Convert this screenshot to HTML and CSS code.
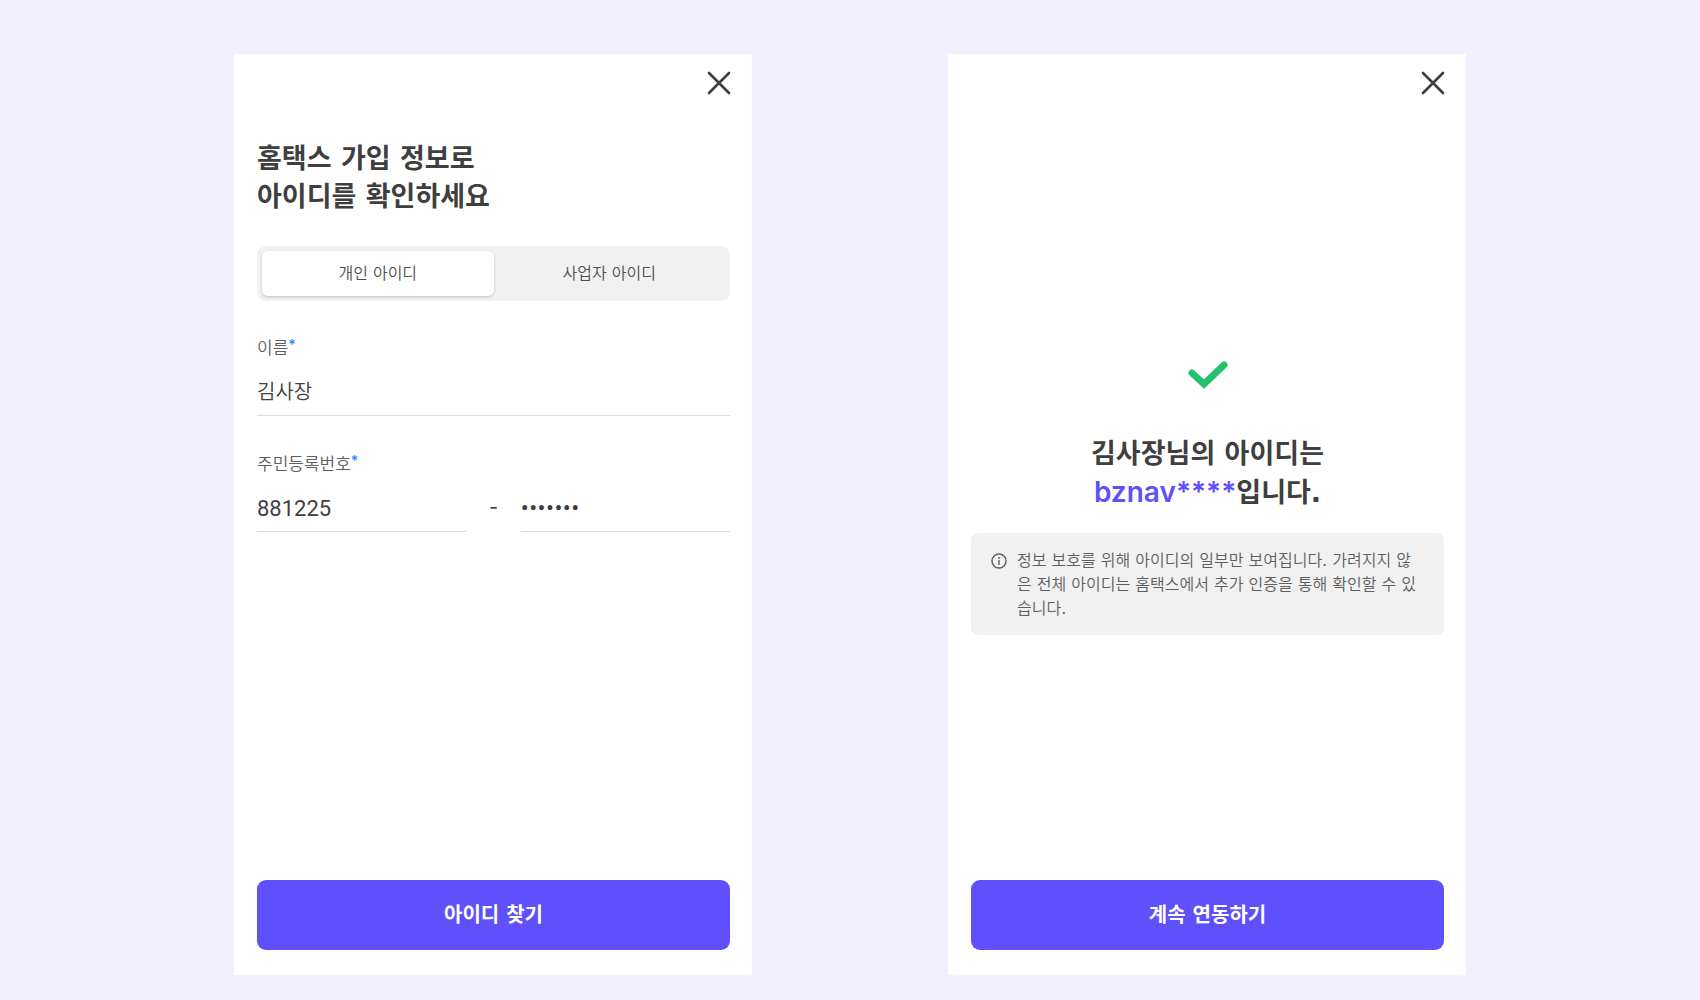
FILE: index.html
```html
<!DOCTYPE html>
<html lang="ko">
<head>
  <meta charset="utf-8">
  <meta name="viewport" content="width=device-width, initial-scale=1">
  <title>홈택스 아이디 찾기</title>
  <link rel="stylesheet" href="styles.css">
</head>
<body>
  <main class="board">
    <section class="screen">
      <header class="topbar">
        <button class="close" type="button" aria-label="닫기">
          <svg viewBox="0 0 24 24" aria-hidden="true"><path d="M2 2L22 22M22 2L2 22"/></svg>
        </button>
      </header>
      <form class="form">
        <h1 class="title">홈택스 가입 정보로<br>아이디를 확인하세요</h1>
        <div class="tabs">
          <button class="tab tab-active" type="button" aria-pressed="true">개인 아이디</button>
          <button class="tab" type="button" aria-pressed="false">사업자 아이디</button>
        </div>
        <div class="field">
          <label class="label" for="name">이름<span class="required">*</span></label>
          <input class="input" id="name" type="text" value="김사장">
        </div>
        <div class="field">
          <label class="label" for="rrn-front">주민등록번호<span class="required">*</span></label>
          <div class="split">
            <input class="input input-number" id="rrn-front" type="text" inputmode="numeric" value="881225">
            <span class="dash">-</span>
            <input class="input input-secret" type="password" value="1234567" aria-label="주민등록번호 뒷자리">
          </div>
        </div>
        <button class="submit" type="button">아이디 찾기</button>
      </form>
    </section>

    <section class="screen">
      <header class="topbar">
        <button class="close" type="button" aria-label="닫기">
          <svg viewBox="0 0 24 24" aria-hidden="true"><path d="M2 2L22 22M22 2L2 22"/></svg>
        </button>
      </header>
      <div class="result">
        <svg class="check" viewBox="0 0 40 28" aria-hidden="true"><path d="M4 12L16 23L36 4"/></svg>
        <h2 class="title">김사장님의 아이디는<br><span class="account">bznav****</span>입니다.</h2>
        <div class="notice">
          <svg class="info" viewBox="0 0 16 16" aria-hidden="true">
            <circle cx="8" cy="8" r="7"/>
            <path d="M8 7V12M8 4V6"/>
          </svg>
          <p class="notice-text">정보 보호를 위해 아이디의 일부만 보여집니다. 가려지지 않은 전체 아이디는 홈택스에서 추가 인증을 통해 확인할 수 있습니다.</p>
        </div>
      </div>
      <button class="submit" type="button">계속 연동하기</button>
    </section>
  </main>
</body>
</html>
```
FILE: styles.css
```css
* {
  box-sizing: border-box;
}

body {
  margin: 0;
  background: #f2f0ff;
  color: #3f3f3f;
  font-family: "DejaVu Sans", "Noto Sans CJK KR", sans-serif;
}

button,
input {
  margin: 0;
  padding: 0;
  border: 0;
  background: none;
  color: inherit;
  font: inherit;
}

.board {
  display: grid;
  grid-template-columns: 1fr 1fr;
  gap: 196px;
  min-height: 100vh;
  padding: 54px 234px 25px;
}

.screen {
  display: flex;
  flex-direction: column;
  padding: 17px 22px 25px 23px;
  background: #fff;
}

.topbar {
  display: flex;
  justify-content: flex-end;
}

.close {
  width: 24px;
  height: 24px;
  margin-right: -1px;
}

.close svg {
  display: block;
  fill: none;
  stroke: #3d3d3d;
  stroke-width: 2.6;
  stroke-linecap: round;
}

.form {
  display: flex;
  flex: 1;
  flex-direction: column;
  padding-top: 45px;
}

.title {
  margin: 0;
  font-size: 27px;
  font-weight: 600;
  line-height: 38px;
}

.tabs {
  display: flex;
  margin-top: 30px;
  padding: 5px;
  border-radius: 9px;
  background: #f1f1f1;
}

.tab {
  flex: 1;
  height: 45px;
  padding-bottom: 4px;
  border-radius: 6px;
  color: #505050;
  font-size: 16px;
  font-weight: 350;
}

.tab-active {
  background: #fff;
  box-shadow: 0 1px 3px rgba(0, 0, 0, 0.2);
}

.field {
  display: flex;
  flex-direction: column;
  padding-top: 34px;
}

.field + .field {
  padding-top: 35px;
}

.label {
  color: #5e5e5e;
  font-size: 17px;
  font-weight: 350;
  line-height: 26px;
}

.required {
  color: #2f86ff;
  font-family: Inter, sans-serif;
  font-size: 14px;
  font-weight: 600;
  line-height: 1;
  vertical-align: 4px;
}

.input {
  width: 100%;
  height: 55px;
  padding-top: 5px;
  border-bottom: 1px solid #ddd;
  border-radius: 0;
  font-family: Roboto, "Noto Sans CJK KR", sans-serif;
  font-size: 20px;
  font-weight: 350;
}

.input-number {
  font-size: 22px;
  font-weight: 400;
}

.input-secret {
  font-size: 26px;
}

.split {
  display: grid;
  grid-template-columns: 1fr 54px 1fr;
  align-items: center;
}

.split .input {
  padding-top: 8px;
}

.dash {
  padding-top: 4px;
  font-family: Inter, sans-serif;
  font-size: 20px;
  text-align: center;
}

.submit {
  height: 70px;
  margin-top: auto;
  padding-bottom: 4px;
  border-radius: 9px;
  background: #5e50fd;
  color: #fff;
  font-size: 20px;
  font-weight: 600;
}

.result {
  display: flex;
  flex: 1;
  flex-direction: column;
  align-items: center;
  justify-content: center;
  padding-top: 21px;
  text-align: center;
}

.check {
  width: 40px;
  height: 28px;
  margin-bottom: 46px;
  fill: none;
  stroke: #25c16f;
  stroke-width: 7;
  stroke-linecap: round;
}

.account {
  color: #5e50fd;
  font-family: Inter, sans-serif;
  font-size: 28px;
}

.notice {
  display: flex;
  gap: 10px;
  margin-top: 21px;
  padding: 16px 20px 14px;
  border-radius: 7px;
  background: #f1f1f1;
  color: #5e5e5e;
  text-align: left;
}

.info {
  flex: none;
  width: 16px;
  height: 16px;
  margin-top: 4px;
  fill: none;
  stroke: #5e5e5e;
  stroke-width: 1.4;
}

.notice-text {
  margin: 0;
  font-family: "DejaVu Sans", "Noto Sans CJK KR DemiLight", "Noto Sans CJK KR", sans-serif;
  font-size: 16px;
  font-weight: 400;
  line-height: 24px;
  word-break: break-all;
}

@media (max-width: 1300px) {
  .board {
    gap: 32px;
    padding: 32px;
  }
}

@media (max-width: 800px) {
  .board {
    grid-template-columns: 1fr;
  }
}
```
